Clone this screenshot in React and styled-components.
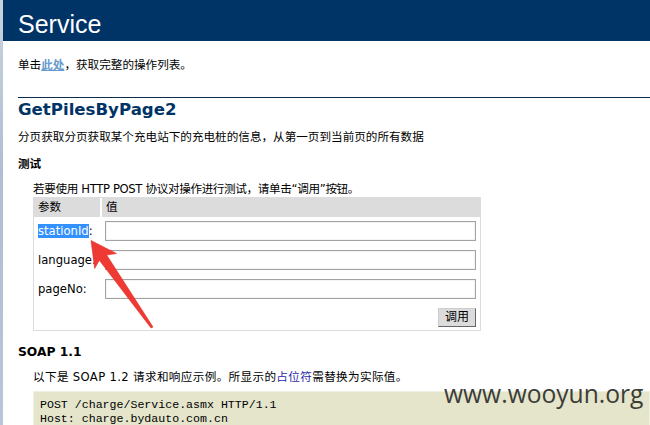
import React from "react";
import styled, { createGlobalStyle } from "styled-components";

const Global = createGlobalStyle`
  html, body { margin: 0; padding: 0; background: #fff; }
  body { width: 650px; height: 425px; overflow: hidden; }
`;

const FONT = `"DejaVu Sans", "Noto Sans CJK SC", sans-serif`;

const Page = styled.div`
  position: relative;
  display: flex;
  width: 650px;
  height: 425px;
  overflow: hidden;
  font-family: ${FONT};
  font-size: 11.6px;
  color: #000;
`;

const Edge = styled.div`
  flex: 0 0 3px;
  background: linear-gradient(to bottom, #c9d3de, #aebfd3 40%, #b7c6d8);
`;

const Main = styled.div`
  flex: 1;
  min-width: 0;
`;

const Header = styled.div`
  box-sizing: border-box;
  height: 41px;
  padding: 10px 0 0 15px;
  background: #003366;
  color: #fff;
  font-family: "Liberation Sans", Arial, sans-serif;
  font-size: 25px;
  line-height: 28px;
`;

const Content = styled.div`
  padding-left: 15px;
`;

const Line = styled.div`
  line-height: 14px;
  margin-top: ${(p) => p.$mt || 0}px;
  margin-left: ${(p) => p.$ml || 0}px;
  letter-spacing: ${(p) => p.$ls || 0}px;
  white-space: nowrap;
`;

const Link = styled.a`
  color: #6699cc;
  font-weight: bold;
  text-decoration: underline;
`;

const H2 = styled.h2`
  margin: 25px 0 0;
  padding-top: 2px;
  border-top: 1px solid #0b2a4c;
  color: #003366;
  font-size: 16.6px;
  line-height: 20px;
  font-weight: bold;
`;

const H3 = styled.h3`
  margin: ${(p) => p.$mt}px 0 0;
  font-size: ${(p) => p.$size || 11.6}px;
  line-height: 14px;
  font-weight: bold;
  color: #000;
`;

const Value = styled.span`
  color: #2828a8;
`;

const Frame = styled.div`
  box-sizing: border-box;
  width: 448px;
  margin: 1px 0 0 15px;
  border: 1px solid #dcdcdc;
`;

const FrameHeader = styled.div`
  display: grid;
  grid-template-columns: 66px 1fr;
  column-gap: 2px;
  height: 19px;
`;

const HeadCell = styled.div`
  background: #dcdcdc;
  padding-left: 4px;
  line-height: 19px;
`;

const FrameBody = styled.div`
  display: grid;
  grid-template-columns: 67px 371px;
  row-gap: 9px;
  padding: 4px 4px 3px 4px;
  align-items: center;
`;

const Label = styled.div`
  line-height: 20px;
  white-space: nowrap;
`;

const Selected = styled.span`
  background: #3390ff;
  color: #fff;
`;

const Input = styled.div`
  box-sizing: border-box;
  height: 20px;
  border: 1px solid #a3a3a3;
  box-shadow: inset 0 0 0 1px #f4f4f4;
  background: #fff;
`;

const ButtonCell = styled.div`
  grid-column: 2;
  display: flex;
  justify-content: flex-end;
`;

const Button = styled.button`
  box-sizing: border-box;
  width: 38px;
  height: 19px;
  padding: 0;
  background: #dcdcdc;
  border-top: 1px solid #cccccc;
  border-left: 1px solid #cccccc;
  border-bottom: 1px solid #666666;
  border-right: 1px solid #666666;
  font-family: ${FONT};
  font-size: 12px;
  line-height: 17px;
  color: #000;
`;

const Pre = styled.pre`
  margin: 7px 0 0 15px;
  padding: 6px 6px 0 6px;
  height: 40px;
  background: #e5e5cc;
  border: 1px solid #f0f0e0;
  font-family: "Liberation Mono", "Courier New", monospace;
  font-size: 11.6px;
  line-height: 14px;
  color: #000;
`;

const Arrow = styled.svg`
  position: absolute;
  left: 85px;
  top: 235px;
  width: 75px;
  height: 100px;
  pointer-events: none;
`;

const Watermark = styled.div`
  position: absolute;
  left: 444px;
  top: 377px;
  font-family: "Open Sans", "DejaVu Sans", sans-serif;
  font-size: 24.6px;
  line-height: 34px;
  color: #3c3c38;
  pointer-events: none;
`;

export default function App() {
  return (
    <>
      <Global />
      <Page>
        <Edge />
        <Main>
          <Header>Service</Header>
          <Content>
            <Line $mt={17}>
              单击<Link href="#">此处</Link>，获取完整的操作列表。
            </Line>
            <H2>GetPilesByPage2</H2>
            <Line $mt={10}>
              分页获取分页获取某个充电站下的充电桩的信息，从第一页到当前页的所有数据
            </Line>
            <H3 $mt={13}>测试</H3>
            <Line $mt={11} $ml={15} $ls={-0.35}>
              若要使用 HTTP POST 协议对操作进行测试，请单击“调用”按钮。
            </Line>
            <Frame>
              <FrameHeader>
                <HeadCell>参数</HeadCell>
                <HeadCell>值</HeadCell>
              </FrameHeader>
              <FrameBody>
                <Label>
                  <Selected>stationId</Selected>:
                </Label>
                <Input />
                <Label>language:</Label>
                <Input />
                <Label>pageNo:</Label>
                <Input />
                <ButtonCell>
                  <Button>调用</Button>
                </ButtonCell>
              </FrameBody>
            </Frame>
            <H3 $mt={14} $size={12.3}>SOAP 1.1</H3>
            <Line $mt={11} $ml={15} $ls={0.35}>
              以下是 SOAP 1.2 请求和响应示例。所显示的<Value>占位符</Value>需替换为实际值。
            </Line>
            <Pre>{`POST /charge/Service.asmx HTTP/1.1
Host: charge.bydauto.com.cn`}</Pre>
          </Content>
        </Main>
        <Arrow viewBox="0 0 75 100">
          <polygon
            points="6,5.5 31.5,18.5 21.7,20.1 68,92 66,93 14.3,25.3 9.7,33.5"
            fill="#ee3a33"
            stroke="#e3302a"
            strokeWidth="0.6"
            strokeLinejoin="round"
          />
        </Arrow>
        <Watermark>www.wooyun.org</Watermark>
      </Page>
    </>
  );
}
